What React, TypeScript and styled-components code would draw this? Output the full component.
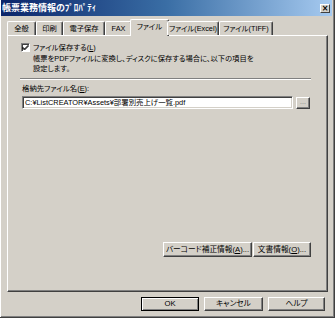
import React from "react";
import styled, { createGlobalStyle } from "styled-components";

const FONT = `"Liberation Sans", "Noto Sans CJK JP", sans-serif`;

const GlobalStyle = createGlobalStyle`
  html, body {
    margin: 0;
    padding: 0;
    background: #d4d0c8;
  }
  body {
    font-family: ${FONT};
    font-feature-settings: "palt" 1;
    color: #000;
  }
`;

const tabs = ["全般", "印刷", "電子保存", "FAX", "ファイル", "ファイル(Excel)", "ファイル(TIFF)"];
const tabWidths = [29, 27, 42, 27, 39, 52, 54];
const ACTIVE = 4;

const App: React.FC = () => {
  return (
    <>
      <GlobalStyle />
      <Window>
        <TitleBar>
          <Title>帳票業務情報のﾌﾟﾛﾊﾟﾃｨ</Title>
          <CloseButton>×</CloseButton>
        </TitleBar>
        <TabStrip>
          {tabs.map((t, i) => (
            <Tab key={t} $active={i === ACTIVE} style={{ width: tabWidths[i] }}>
              {t}
            </Tab>
          ))}
        </TabStrip>
        <Panel>
          <CheckRow>
            <CheckBox>
              <svg width="7" height="7" viewBox="0 0 7 7">
                <path d="M0.5 3 L2.5 5 L6.5 1 M0.5 4 L2.5 6 L6.5 2" stroke="#000" strokeWidth="1" fill="none" />
              </svg>
            </CheckBox>
            <Label>
              ファイル保存する(<u>L</u>)
            </Label>
          </CheckRow>
          <Description>
            帳票をPDFファイルに変換し、ディスクに保存する場合に、以下の項目を
            <br />
            設定します。
          </Description>
          <Separator />
          <FieldLabel>
            格納先ファイル名(<u>E</u>):
          </FieldLabel>
          <InputRow>
            <TextBox>C:¥ListCREATOR¥Assets¥部署別売上げ一覧.pdf</TextBox>
            <BrowseButton>...</BrowseButton>
          </InputRow>
          <Spacer />
          <PanelButtons>
            <Button $w={89} $h={15}>
              バーコード補正情報(<u>A</u>)...
            </Button>
            <Button $w={58} $h={15}>
              文書情報(<u>O</u>)...
            </Button>
          </PanelButtons>
        </Panel>
        <DialogButtons>
          <Button $w={58} $h={14} $default>
            OK
          </Button>
          <Button $w={59} $h={14}>
            キャンセル
          </Button>
          <Button $w={57} $h={14}>
            ヘルプ
          </Button>
        </DialogButtons>
      </Window>
    </>
  );
};

const Window = styled.div`
  width: 335px;
  height: 318px;
  box-sizing: border-box;
  background: #d4d0c8;
  border-right: 1px solid #404040;
  border-bottom: 1px solid #404040;
  box-shadow: inset 1px 0 0 #ffffff, inset -1px -1px 0 #808080;
  padding: 0 2px 0 1px;
  display: flex;
  flex-direction: column;
`;

const TitleBar = styled.div`
  height: 16px;
  background: linear-gradient(to right, #0a246a 0%, #3a6ea5 50%, #a6caf0 100%);
  display: flex;
  align-items: center;
  justify-content: space-between;
  padding: 0 2px 0 1px;
`;

const Title = styled.span`
  color: #fff;
  font-weight: bold;
  font-size: 9px;
  line-height: 1;
  white-space: nowrap;
`;

const CloseButton = styled.span`
  width: 10px;
  height: 9px;
  box-sizing: border-box;
  background: #d4d0c8;
  border-top: 1px solid #fff;
  border-left: 1px solid #fff;
  border-right: 1px solid #404040;
  border-bottom: 1px solid #404040;
  font-family: "DejaVu Sans", sans-serif;
  font-size: 8px;
  font-weight: bold;
  line-height: 7px;
  text-align: center;
  color: #000;
`;

const TabStrip = styled.div`
  display: flex;
  align-items: flex-end;
  height: 19px;
  padding-left: 6px;
  position: relative;
  z-index: 1;
`;

const Tab = styled.div<{ $active?: boolean }>`
  box-sizing: border-box;
  flex: none;
  height: ${(p) => (p.$active ? 17 : 14)}px;
  margin: ${(p) => (p.$active ? "0 -2px -1px -2px" : "0")};
  padding-bottom: ${(p) => (p.$active ? 3 : 0)}px;
  background: #d4d0c8;
  border-top: 1px solid #fff;
  border-left: 1px solid #fff;
  border-right: 1px solid #404040;
  border-radius: 2px 2px 0 0;
  box-shadow: inset -1px 0 0 #808080;
  font-size: 7.3px;
  line-height: 1;
  display: flex;
  align-items: center;
  justify-content: center;
  white-space: nowrap;
`;

const Panel = styled.div`
  width: 321px;
  height: 257px;
  margin-left: 6px;
  box-sizing: border-box;
  border-top: 1px solid #fff;
  border-left: 1px solid #fff;
  border-right: 1px solid #404040;
  border-bottom: 1px solid #404040;
  box-shadow: inset -1px -1px 0 #808080;
  padding: 6px 16px 34px 12px;
  display: flex;
  flex-direction: column;
`;

const CheckRow = styled.div`
  display: flex;
  align-items: center;
  height: 11px;
`;

const CheckBox = styled.div`
  width: 9px;
  height: 9px;
  box-sizing: border-box;
  background: #fff;
  border-top: 1px solid #808080;
  border-left: 1px solid #808080;
  border-right: 1px solid #fff;
  border-bottom: 1px solid #fff;
  box-shadow: inset 1px 1px 0 #404040;
  display: flex;
  align-items: center;
  justify-content: center;
  margin-left: 1px;
  margin-right: 3px;
`;

const Label = styled.span`
  font-size: 7.4px;
  line-height: 1;
  white-space: nowrap;
`;

const Description = styled.div`
  margin-left: 13px;
  margin-top: 1px;
  font-size: 7.3px;
  line-height: 10px;
  white-space: nowrap;
`;

const Separator = styled.div`
  height: 0;
  margin-top: 4px;
  border-top: 1px solid #808080;
  border-bottom: 1px solid #fff;
`;

const FieldLabel = styled.div`
  margin: 4px 0 0 2px;
  font-size: 7.4px;
  line-height: 10px;
  white-space: nowrap;
`;

const InputRow = styled.div`
  display: flex;
  align-items: center;
  gap: 3px;
  margin: 2px 0 0 2px;
`;

const TextBox = styled.div`
  width: 271px;
  height: 13px;
  box-sizing: border-box;
  background: #fff;
  border-top: 1px solid #808080;
  border-left: 1px solid #808080;
  border-right: 1px solid #fff;
  border-bottom: 1px solid #fff;
  box-shadow: inset 1px 1px 0 #404040, inset -1px -1px 0 #d4d0c8;
  font-size: 7.4px;
  line-height: 11px;
  padding-left: 2px;
  white-space: nowrap;
  overflow: hidden;
`;

const BrowseButton = styled.div`
  width: 14px;
  height: 12px;
  box-sizing: border-box;
  background: #d4d0c8;
  border-top: 1px solid #fff;
  border-left: 1px solid #fff;
  border-right: 1px solid #404040;
  border-bottom: 1px solid #404040;
  box-shadow: inset -1px -1px 0 #808080;
  color: #808080;
  font-size: 7px;
  line-height: 8px;
  text-align: center;
`;

const Spacer = styled.div`
  flex: 1;
`;

const PanelButtons = styled.div`
  display: flex;
  justify-content: flex-end;
  gap: 1px;
`;

const Button = styled.div<{ $w: number; $h: number; $default?: boolean }>`
  width: ${(p) => p.$w}px;
  height: ${(p) => p.$h}px;
  box-sizing: border-box;
  background: #d4d0c8;
  border: 1px solid;
  border-color: ${(p) => (p.$default ? "#000" : "#fff #404040 #404040 #fff")};
  box-shadow: ${(p) =>
    p.$default ? "inset 1px 1px 0 #fff, inset -1px -1px 0 #808080" : "inset -1px -1px 0 #808080"};
  font-size: 7.7px;
  line-height: 1;
  display: flex;
  align-items: center;
  justify-content: center;
  white-space: nowrap;
`;

const DialogButtons = styled.div`
  display: flex;
  justify-content: flex-end;
  gap: 5px;
  margin-top: 5px;
  padding-right: 7px;
`;

export default App;
